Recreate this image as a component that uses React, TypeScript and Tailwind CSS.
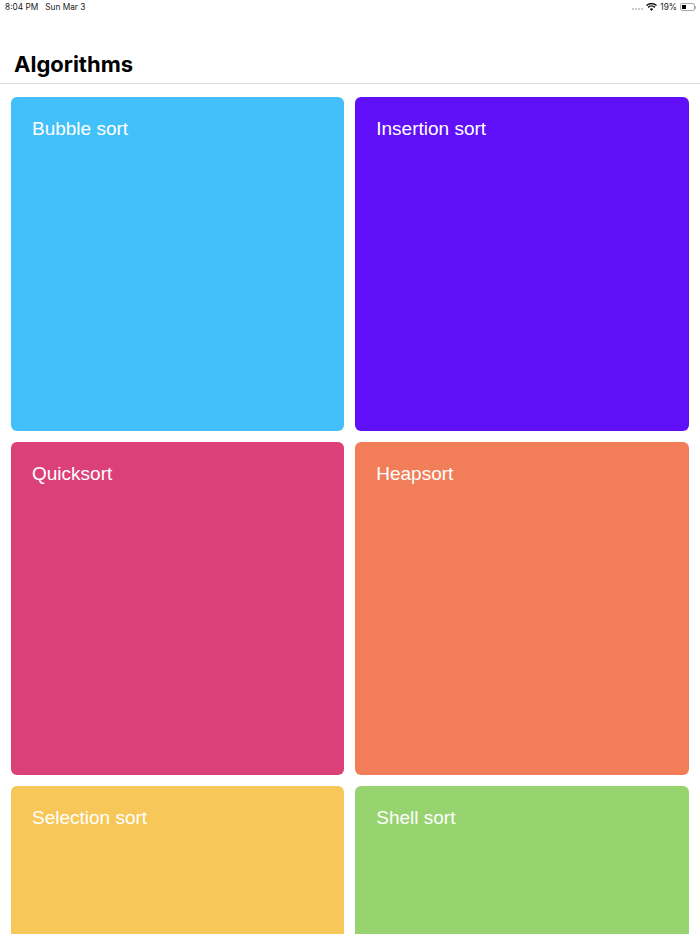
const algorithms = [
  { name: "Bubble sort", color: "bg-[#43c0f9]" },
  { name: "Insertion sort", color: "bg-[#600ff9]" },
  { name: "Quicksort", color: "bg-[#db4178]" },
  { name: "Heapsort", color: "bg-[#f27e59]" },
  { name: "Selection sort", color: "bg-[#f7c759]" },
  { name: "Shell sort", color: "bg-[#97d36f]" },
];

const StatusBar = () => (
  <div className="flex h-[14px] items-center justify-between pl-[5px] pr-[4px] text-[8.3px] leading-[14px] text-[#222] font-['Inter',sans-serif]">
    <div className="flex gap-[7px]">
      <span>8:04 PM</span>
      <span>Sun Mar 3</span>
    </div>
    <div className="flex items-center">
      {/* signal dots */}
      <div className="mr-[3px] mt-[4px] flex gap-[1px]">
        {[0, 1, 2, 3].map((i) => (
          <div key={i} className="size-[2px] rounded-full bg-[#bbb]" />
        ))}
      </div>
      <svg width="11" height="8" viewBox="0 0 22 16" className="mr-[3px]">
        <path
          d="M11 16 L7.6 12.2 A5 5 0 0 1 14.4 12.2 Z M5.4 9.8 L3.2 7.4 A11.5 11.5 0 0 1 18.8 7.4 L16.6 9.8 A8.2 8.2 0 0 0 5.4 9.8 Z M1.9 6 L0 3.9 A16.5 16.5 0 0 1 22 3.9 L20.1 6 A13.6 13.6 0 0 0 1.9 6 Z"
          fill="#111"
        />
      </svg>
      <span className="mr-[3px]">19%</span>
      <div className="flex items-center">
        <div className="h-[8px] w-[15px] rounded-[2px] border border-[#aaa] p-[1px]">
          <div className="h-full w-[4px] bg-black" />
        </div>
        <div className="h-[3px] w-[1px] rounded-r-sm bg-[#aaa]" />
      </div>
    </div>
  </div>
);

export default function App() {
  return (
    <div className="h-[934px] w-[700px] overflow-hidden bg-white font-['Liberation_Sans',sans-serif]">
      <StatusBar />

      {/* Nav header */}
      <div className="flex h-[70px] items-end border-b border-[#dcdcdc] px-[14px] pb-[5px]">
        <h1 className="font-['Inter',sans-serif] text-[22px] font-bold leading-[28px] text-black">
          Algorithms
        </h1>
      </div>

      {/* Cards */}
      <div className="grid grid-cols-2 gap-[11px] pl-[11px] pr-[11.5px] pt-[13px]">
        {algorithms.map((algo) => (
          <div key={algo.name} className={`h-[333.5px] rounded-[6px] px-[21px] py-[20px] ${algo.color}`}>
            <span className="block text-[19px] leading-[23px] text-white">{algo.name}</span>
          </div>
        ))}
      </div>
    </div>
  );
}
